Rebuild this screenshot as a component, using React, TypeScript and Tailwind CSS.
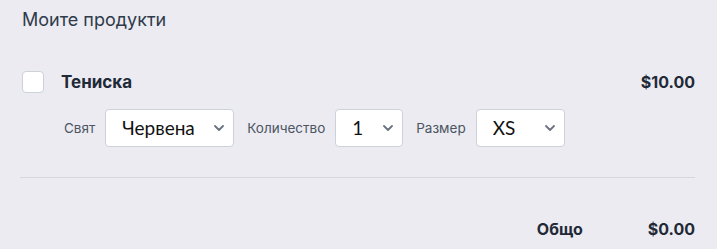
import React from "react";

const ChevronDown: React.FC = () => (
  <svg
    className="pointer-events-none absolute right-[10px] top-1/2 -translate-y-1/2"
    width="10"
    height="6"
    viewBox="0 0 10 6"
    fill="none"
  >
    <path d="M1 1l4 4 4-4" stroke="#6b7280" strokeWidth="1.8" strokeLinecap="round" strokeLinejoin="round" />
  </svg>
);

type FieldProps = {
  label: string;
  value: string;
  options: string[];
  width: string;
};

const Field: React.FC<FieldProps> = ({ label, value, options, width }) => (
  <label className="flex items-center gap-[10px]">
    <span className="text-[13.5px] text-[#4b5563]">{label}</span>
    <span className={`relative block h-[38px] ${width}`}>
      <select
        defaultValue={value}
        className="h-full w-full appearance-none rounded-[4px] border border-[#cbd2dc] bg-white pl-[16px] pr-8 font-['Lato',sans-serif] text-[19px] text-[#111111] outline-none"
      >
        {options.map((o) => (
          <option key={o} value={o}>
            {o}
          </option>
        ))}
      </select>
      <ChevronDown />
    </span>
  </label>
);

const App: React.FC = () => {
  return (
    <div className="min-h-screen bg-[#ebebf1] pl-5 pr-[22px] pt-[8px] font-['Inter',sans-serif]">
      <h2 className="ml-[2px] text-[18px] leading-6 text-[#2f3a4a]">Моите продукти</h2>

      <div className="mt-[38px] flex items-center justify-between">
        <div className="flex items-center">
          <input
            type="checkbox"
            className="ml-[2px] h-[22px] w-[22px] appearance-none rounded-[4px] border border-[#cbd2dc] bg-white"
          />
          <span className="ml-[17px] text-[17px] font-bold leading-6 text-[#1f2937]">Тениска</span>
        </div>
        <span className="text-[16px] font-bold leading-6 text-[#1f2937]">$10.00</span>
      </div>

      <div className="mt-[15px] flex items-center gap-[13px] pl-[44px]">
        <Field label="Свят" value="Червена" options={["Червена", "Синя", "Зелена"]} width="w-[129px]" />
        <Field label="Количество" value="1" options={["1", "2", "3"]} width="w-[68px]" />
        <Field label="Размер" value="XS" options={["XS", "S", "M", "L"]} width="w-[89px]" />
      </div>

      <div className="mt-[30px] border-t border-[#d6d6dc]" />

      <div className="mt-[39px] flex items-center justify-end gap-[65px] text-[16px] font-bold leading-6 text-[#1f2937]">
        <span>Общо</span>
        <span>$0.00</span>
      </div>
    </div>
  );
};

export default App;
